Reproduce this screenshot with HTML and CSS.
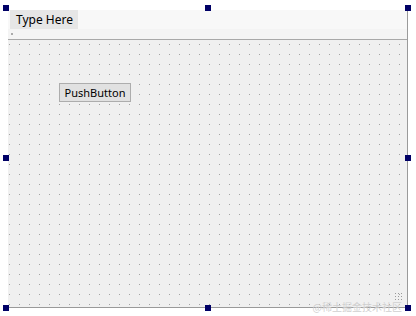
FILE: index.html
```html
<!DOCTYPE html>
<html lang="en">
<head>
  <meta charset="UTF-8">
  <title>Form Designer</title>
  <link rel="stylesheet" href="styles.css">
</head>
<body>
  <div class="designer">
    <!-- o formulário em edição -->
    <div class="form">
      <div class="menubar">
        <span class="menu-item">Type Here</span>
      </div>
      <div class="toolbar"><span class="tool-dot"></span></div>
      <div class="grid">
        <button class="push">PushButton</button>
        <span class="grip"></span>
      </div>
    </div>

    <!-- alças de seleção -->
    <span class="handle h-tl"></span>
    <span class="handle h-tm"></span>
    <span class="handle h-tr"></span>
    <span class="handle h-ml"></span>
    <span class="handle h-mr"></span>
    <span class="handle h-bl"></span>
    <span class="handle h-bm"></span>
    <span class="handle h-br"></span>

    <span class="watermark">@稀土掘金技术社区</span>
  </div>
</body>
</html>
```

FILE: styles.css
```css
body {
  margin: 0;
  background: #fff;
  font-family: "Noto Sans", "Open Sans", sans-serif;
}
.designer {
  position: relative;
  width: 416px;
  height: 316px;
  padding: 10px 0 0 8px;
  box-sizing: border-box;
}
.form {
  width: 400px;
  height: 298px;
  background: #f0f0f0;
  border-right: 1px solid #9a9a9a;
  border-bottom: 1px solid #9a9a9a;
  box-sizing: border-box;
  display: flex;
  flex-direction: column;
}
.menubar {
  height: 19px;
  background: #f8f8f8;
  padding-left: 2px;
  display: flex;
}
.menu-item {
  width: 68px;
  background: #e6e6e6;
  font-size: 12px;
  line-height: 19px;
  color: #000;
  padding-left: 6px;
  box-sizing: border-box;
}
.toolbar {
  height: 10px;
  background: #f4f4f4;
  border-bottom: 1px solid #a8a8a8;
  position: relative;
}
.tool-dot {
  display: block;
  width: 2px;
  height: 2px;
  background: #aaa;
  margin: 4px 0 0 3px;
}
.grid {
  flex: 1;
  position: relative;
  background-color: #f0f0f0;
  background-image: radial-gradient(circle at 0.5px 0.5px, #a4a4a4 0.6px, transparent 0.7px);
  background-size: 10px 10px;
  background-position: 1px 4px;
}
.push {
  position: absolute;
  left: 51px;
  top: 43px;
  width: 72px;
  height: 19px;
  background: #e1e1e1;
  border: 1px solid #adadad;
  font-family: "Noto Sans", "Open Sans", sans-serif;
  font-size: 11px;
  padding: 0;
  color: #000;
}
.grip {
  position: absolute;
  right: 3px;
  bottom: 5px;
  width: 9px;
  height: 9px;
  background-image: radial-gradient(circle at 0.5px 0.5px, #9a9a9a 0.6px, transparent 0.7px);
  background-size: 3px 3px;
}
.handle {
  position: absolute;
  width: 6px;
  height: 6px;
  background: #000066;
  border: 0;
}
.h-tl { left: 3px; top: 5px; }
.h-tm { left: 205px; top: 5px; }
.h-tr { left: 405px; top: 5px; }
.h-ml { left: 3px; top: 155px; }
.h-mr { left: 405px; top: 155px; }
.h-bl { left: 3px; top: 305px; }
.h-bm { left: 205px; top: 305px; }
.h-br { left: 405px; top: 305px; }
.watermark {
  position: absolute;
  right: 14px;
  bottom: 2px;
  font-size: 10px;
  color: #d0d0d0;
  font-family: "Noto Sans CJK SC", sans-serif;
}
```
